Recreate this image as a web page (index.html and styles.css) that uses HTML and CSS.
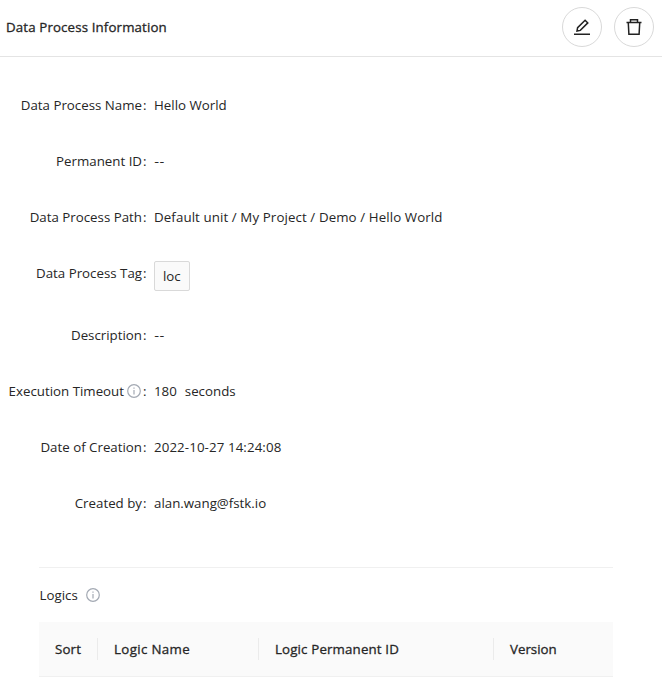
FILE: index.html
```html
<!DOCTYPE html>
<html lang="en">
<head>
<meta charset="utf-8">
<title>Data Process Information</title>
<link rel="stylesheet" href="styles.css">
</head>
<body>
<header class="header">
  <h1 class="title">Data Process Information</h1>
  <div class="actions">
    <button class="round" aria-label="Edit"><svg width="18" height="18" viewBox="0 0 18 18" fill="none" stroke="#222" stroke-width="1.5"><path d="M1 16.2h16M4 13l.6-3.3 7.5-7.5 2.7 2.7-7.5 7.5z"/></svg></button>
    <button class="round" aria-label="Delete"><svg width="18" height="18" viewBox="0 0 18 18" fill="none" stroke="#222" stroke-width="1.5"><path d="M1.5 4.5h15M5.5 4V1.8h7V4M3.3 5l.6 11.2h10.2L14.7 5"/></svg></button>
  </div>
</header>
<main>
  <dl class="details">
    <div class="row"><dt><span>Data Process Name</span></dt><dd><span>Hello World</span></dd></div>
    <div class="row"><dt><span>Permanent ID</span></dt><dd><span class="empty">--</span></dd></div>
    <div class="row"><dt><span>Data Process Path</span></dt><dd><span class="path">Default unit / My Project / Demo / Hello World</span></dd></div>
    <div class="row row-tag"><dt><span>Data Process Tag</span></dt><dd><span class="tag">loc</span></dd></div>
    <div class="row"><dt><span>Description</span></dt><dd><span class="empty">--</span></dd></div>
    <div class="row"><dt><span>Execution Timeout</span><svg class="info" viewBox="0 0 14 14"><circle cx="7" cy="7" r="6.3"/><path d="M7 6v4.5M7 3.5v1.3"/></svg></dt><dd><span>180</span><span class="unit">seconds</span></dd></div>
    <div class="row"><dt><span>Date of Creation</span></dt><dd><span class="path">2022-10-27 14:24:08</span></dd></div>
    <div class="row"><dt><span>Created by</span></dt><dd><span>alan.wang@fstk.io</span></dd></div>
  </dl>
  <section class="logics">
    <h2 class="subtitle"><span>Logics</span><svg class="info" viewBox="0 0 14 14"><circle cx="7" cy="7" r="6.3"/><path d="M7 6v4.5M7 3.5v1.3"/></svg></h2>
    <div class="thead">
      <div class="th">Sort</div>
      <div class="th th-name">Logic Name</div>
      <div class="th">Logic Permanent ID</div>
      <div class="th th-version">Version</div>
    </div>
  </section>
</main>
</body>
</html>
```
FILE: styles.css
```css
* { box-sizing: border-box; }
body { margin: 0; background: #fff; color: #262626; font: 400 13.3px/22px "Open Sans", "Noto Sans", sans-serif; white-space: nowrap; }
h1, h2, dl, dd { margin: 0; font-size: inherit; font-weight: inherit; }
.header { display: flex; align-items: center; justify-content: space-between; height: 57px; padding: 0 8px 3px 6px; border-bottom: 1px solid #e4e4e4; }
.title { letter-spacing: .13px; -webkit-text-stroke: .3px currentColor; }
.actions { display: flex; gap: 12px; }
.round { display: flex; align-items: center; justify-content: center; width: 40px; height: 40px; padding: 0; border: 1px solid #d9d9d9; border-radius: 50%; background: #fff; }
.details { padding-top: 37px; }
.row { display: flex; align-items: flex-start; height: 56px; }
.row-tag { height: 62px; }
dt { display: flex; align-items: center; justify-content: flex-end; width: 154px; }
dt::after { content: ":"; width: 4px; margin: 0 7px 0 1px; }
dd { display: flex; }
.path { letter-spacing: .1px; }
.empty { letter-spacing: 1px; padding-left: .5px; -webkit-text-stroke: .2px currentColor; }
.tag { height: 30px; padding: 0 8px; border: 1px solid #d9d9d9; border-radius: 2px; background: #fafafa; line-height: 28px; margin-top: -1px; }
.unit { margin-left: 8px; }
.info { width: 14px; height: 14px; fill: none; stroke: #a3a9b3; stroke-width: 1.2; }
dt .info { margin: 0 1px 0 3px; }
.logics { width: 574px; margin: 19px 0 0 39px; border-top: 1px solid #f0f0f0; }
.subtitle { display: flex; align-items: center; gap: 8px; height: 54px; padding-left: .6px; }
.thead { display: grid; grid-template-columns: 59px 161px 235px 119px; align-items: center; height: 55px; background: #fafafa; border-bottom: 1px solid #f0f0f0; letter-spacing: .15px; -webkit-text-stroke: .3px currentColor; }
.th { padding-left: 16px; border-right: 1px solid #ebebeb; line-height: 22px; }
.th-name { letter-spacing: .35px; }
.th-version { border: 0; letter-spacing: 0; }
```
